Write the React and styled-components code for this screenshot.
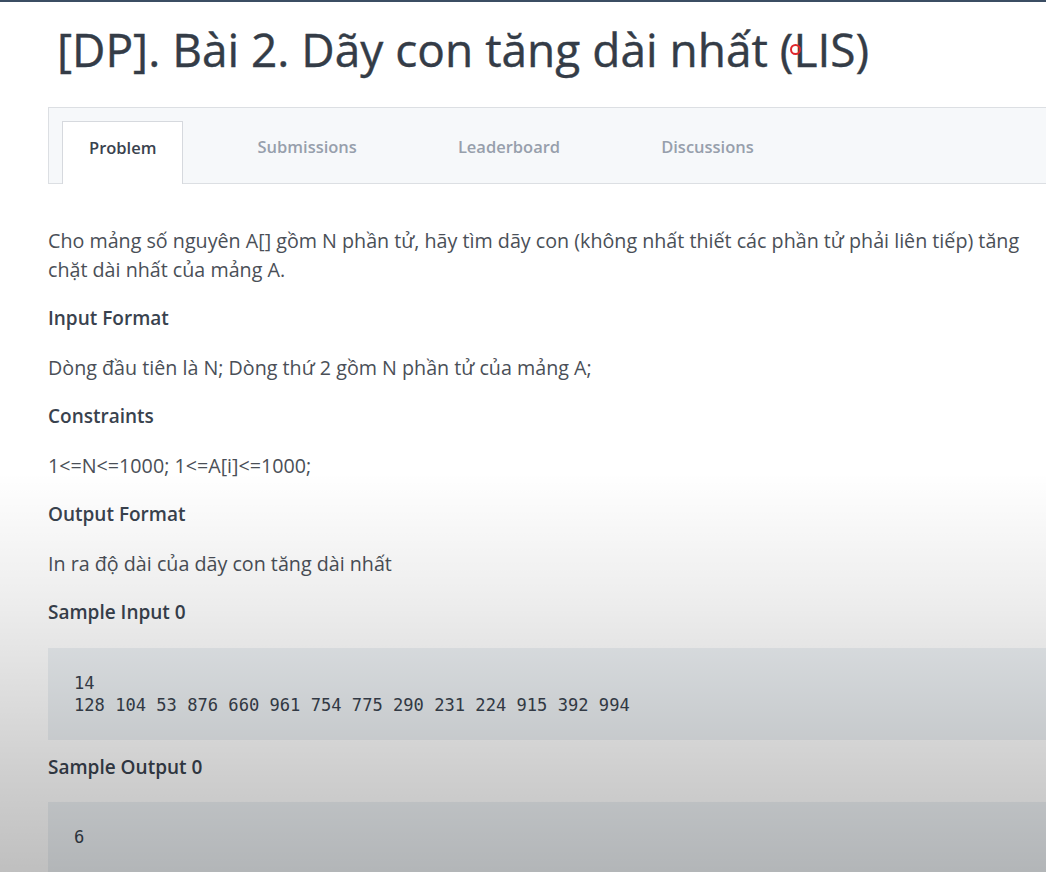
import React from "react";
import styled, { createGlobalStyle } from "styled-components";

const GlobalStyle = createGlobalStyle`
  html, body {
    margin: 0;
    padding: 0;
    background: #ffffff;
  }
  body {
    font-family: "Open Sans", "Noto Sans", sans-serif;
    color: #39424e;
  }
`;

const Page = styled.div`
  position: relative;
  width: 1046px;
  height: 872px;
  overflow: hidden;
  border-top: 2px solid #3b4d63;
  box-sizing: border-box;
  background: #ffffff;
`;

const Title = styled.h1`
  margin: 0;
  padding: 18px 0 0 57px;
  height: 84px;
  box-sizing: border-box;
  font-size: 46px;
  line-height: 58px;
  font-weight: 400;
  color: #343c47;
  white-space: nowrap;
  -webkit-text-stroke: 0.4px #343c47;
`;

const Body = styled.div`
  width: 1000px;
  margin-left: 48px;
`;

const TabBar = styled.div`
  display: flex;
  align-items: flex-end;
  gap: 47px;
  height: 77px;
  width: 1100px;
  box-sizing: border-box;
  padding-left: 13px;
  margin-top: 21px;
  background: #f6f8fa;
  border: 1px solid #dcdfe3;
`;

const Tab = styled.div`
  display: flex;
  align-items: center;
  justify-content: center;
  height: ${(p) => (p.active ? "63px" : "62px")};
  margin-bottom: ${(p) => (p.active ? "-1px" : "0")};
  padding: 0 26px 12px;
  box-sizing: border-box;
  font-size: 16.5px;
  font-weight: 600;
  color: ${(p) => (p.active ? "#39424e" : "#979fac")};
  background: ${(p) => (p.active ? "#ffffff" : "transparent")};
  border: 1px solid ${(p) => (p.active ? "#d6d9de" : "transparent")};
  border-bottom: none;
`;

const Content = styled.div`
  padding-top: 42px;
`;

const Para = styled.p`
  margin: 0 0 20px;
  font-size: 19.7px;
  line-height: 29px;
  color: #4a4f57;
`;

const Heading = styled.h3`
  margin: 0 0 ${(p) => p.$after || 20}px;
  font-size: 19px;
  line-height: 29px;
  font-weight: 600;
  color: #39424e;
`;

const Code = styled.pre`
  margin: 0 0 ${(p) => p.$after || 13}px;
  width: 1100px;
  box-sizing: border-box;
  padding: 24px 26px;
  background: #eef2f5;
  font-family: "DejaVu Sans Mono", "Liberation Mono", monospace;
  font-size: 17.1px;
  line-height: 22px;
  color: #39424e;
`;

const Shade = styled.div`
  position: absolute;
  inset: 0;
  pointer-events: none;
  background: linear-gradient(
    to bottom,
    rgba(0, 0, 0, 0) 0px,
    rgba(0, 0, 0, 0) 470px,
    rgba(0, 0, 0, 0.07) 600px,
    rgba(0, 0, 0, 0.19) 770px,
    rgba(0, 0, 0, 0.25) 872px
  );
`;

const Cursor = styled.div`
  position: absolute;
  left: 790px;
  top: 42px;
  width: 7px;
  height: 7px;
  border: 2px solid #e0262a;
  border-radius: 50%;
  pointer-events: none;
`;

const tabs = ["Problem", "Submissions", "Leaderboard", "Discussions"];

export default function App() {
  return (
    <>
      <GlobalStyle />
      <Page>
        <Title>[DP]. Bài 2. Dãy con tăng dài nhất (LIS)</Title>
        <Body>
          <TabBar>
            {tabs.map((t, i) => (
              <Tab key={t} active={i === 0}>
                {t}
              </Tab>
            ))}
          </TabBar>
          <Content>
            <Para>
              Cho mảng số nguyên A[] gồm N phần tử, hãy tìm dãy con (không nhất thiết các phần tử phải liên tiếp) tăng chặt dài nhất của mảng A.
            </Para>
            <Heading>Input Format</Heading>
            <Para>Dòng đầu tiên là N; Dòng thứ 2 gồm N phần tử của mảng A;</Para>
            <Heading>Constraints</Heading>
            <Para>1&lt;=N&lt;=1000; 1&lt;=A[i]&lt;=1000;</Para>
            <Heading>Output Format</Heading>
            <Para>In ra độ dài của dãy con tăng dài nhất</Para>
            <Heading $after={21}>Sample Input 0</Heading>
            <Code>{"14\n128 104 53 876 660 961 754 775 290 231 224 915 392 994"}</Code>
            <Heading $after={20}>Sample Output 0</Heading>
            <Code>{"6"}</Code>
          </Content>
        </Body>
        <Shade />
        <Cursor />
      </Page>
    </>
  );
}
